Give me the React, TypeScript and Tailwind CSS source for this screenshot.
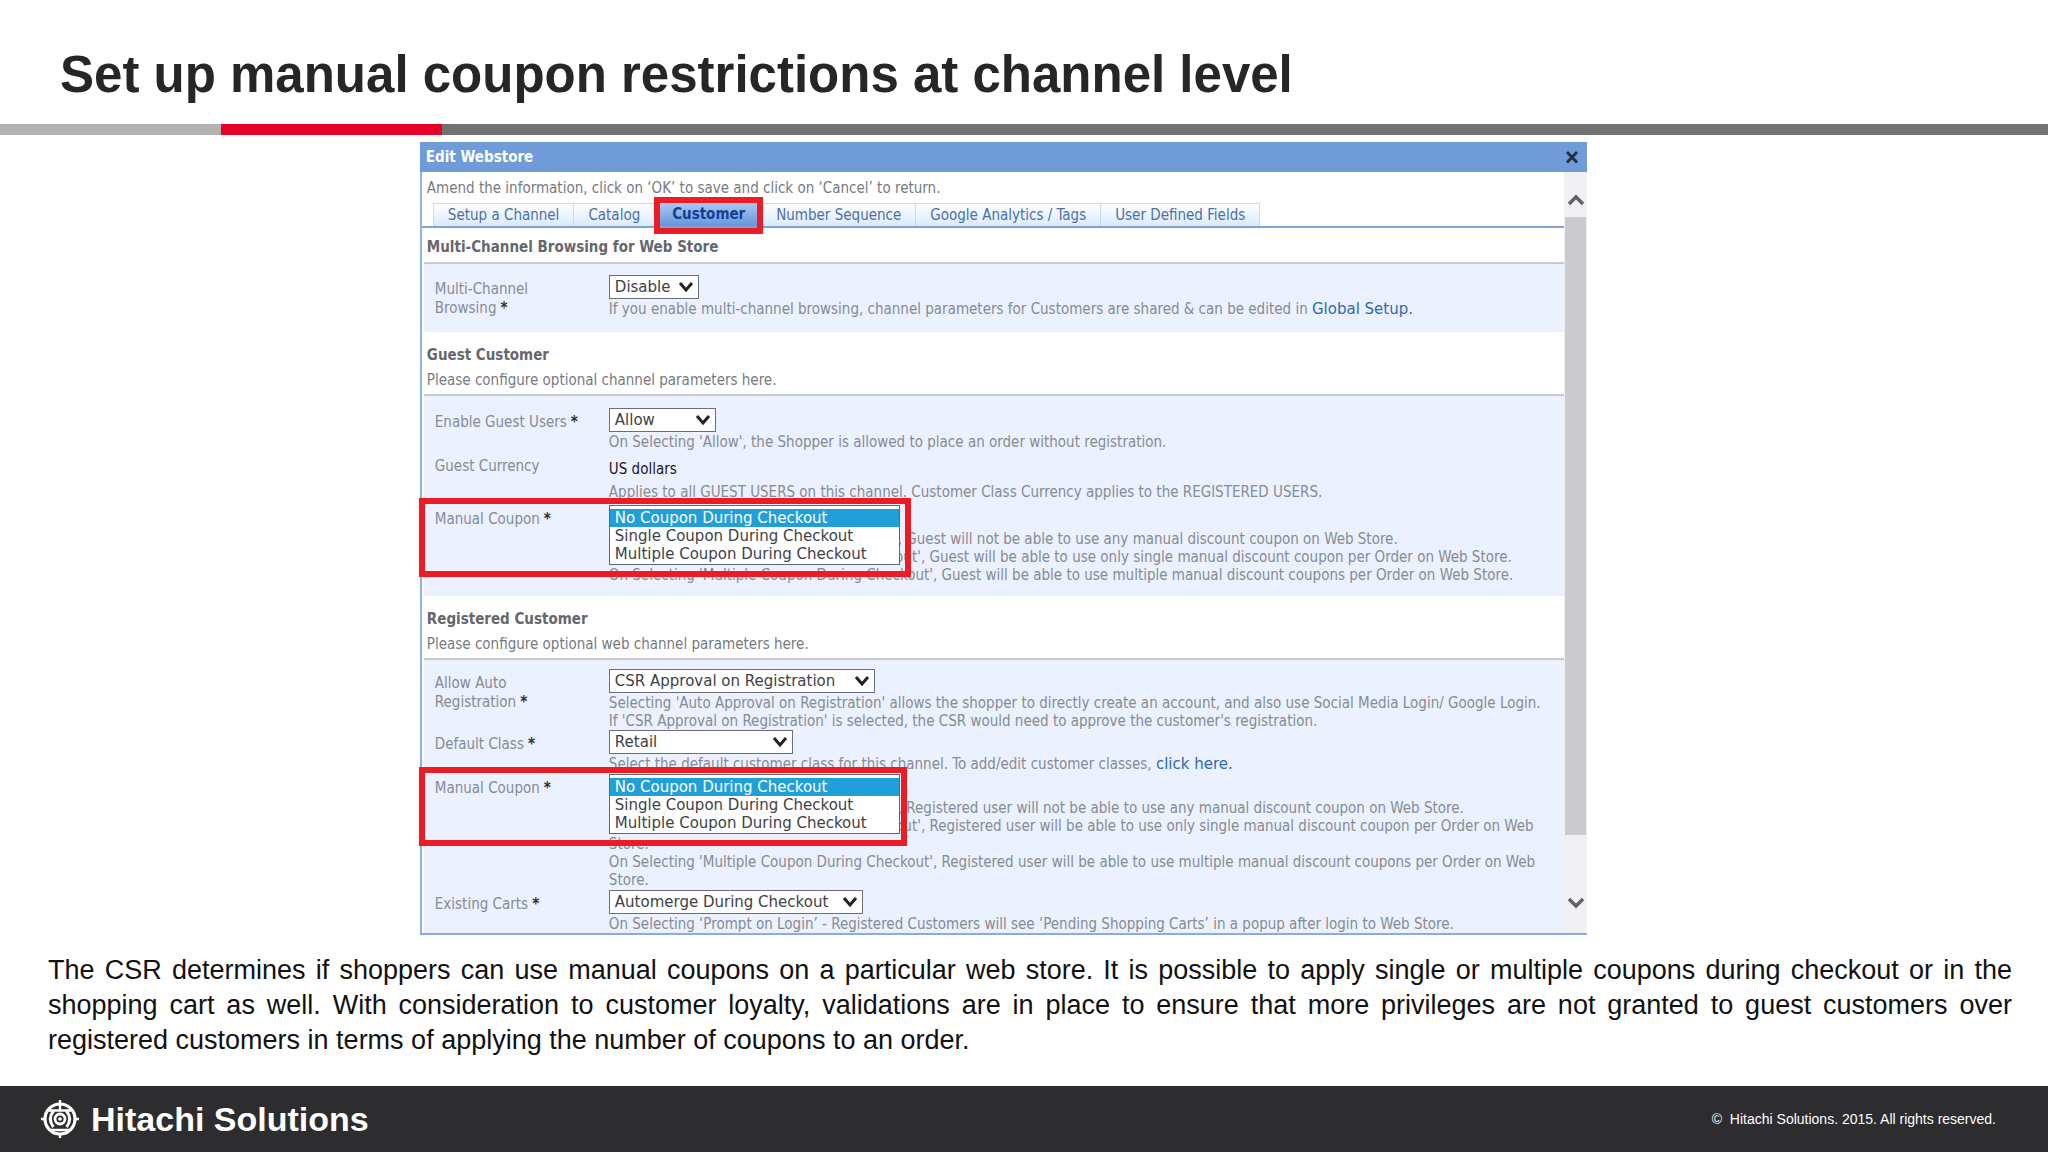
import { ReactNode } from "react";

const couponOptions = [
  "No Coupon During Checkout",
  "Single Coupon During Checkout",
  "Multiple Coupon During Checkout",
];

const tabs = [
  "Setup a Channel",
  "Catalog",
  "Customer",
  "Number Sequence",
  "Google Analytics / Tags",
  "User Defined Fields",
];

interface SectionProps {
  title: string;
  subtitle?: string;
  children: ReactNode;
}

const Section = ({ title, subtitle, children }: SectionProps) => (
  <section className="ml-[2px]">
    <div className={subtitle ? "pt-3 pb-[3px]" : "pt-2 pb-1"}>
      <h2 className="pl-[3px] text-[15px] leading-[22px] font-bold text-[#65676b]">{title}</h2>
      {subtitle && <p className="mt-[3px] pl-[3px] text-[15px] leading-[22px]">{subtitle}</p>}
    </div>
    <div className="border-t-2 border-[#c8cacd] bg-[#ebf1fe] pl-[11px] text-[#868b93]">{children}</div>
  </section>
);

interface RowProps {
  label: string;
  id?: string;
  required?: boolean;
  highlight?: string;
  children: ReactNode;
}

const Row = ({ label, id, required, highlight, children }: RowProps) => (
  <div className="relative flex items-start">
    <label htmlFor={id} className="w-[174px] shrink-0 pt-[5px] pr-4 text-[15px] leading-[19px]">
      {label}
      {required && <b className="ml-1 text-[#2c2e33]">*</b>}
    </label>
    <div className="min-w-0 flex-1 pr-4">{children}</div>
    {highlight && (
      <div
        className={`pointer-events-none absolute -top-[7px] -left-4 h-[79px] border-[6px] border-[#ed1c24] ${highlight}`}
      />
    )}
  </div>
);

const Help = ({ children }: { children: ReactNode }) => (
  <p className="mt-px text-[15px] leading-[18px]">{children}</p>
);

interface DropDownProps {
  id: string;
  value: string;
  width: string;
}

const DropDown = ({ id, value, width }: DropDownProps) => (
  <div className={`relative h-6 ${width}`}>
    <select
      id={id}
      defaultValue={value}
      className="block h-6 w-full appearance-none border border-[#6b6f75] bg-white pl-[5px] font-['DejaVu_Sans',sans-serif] text-[15px] leading-5 text-[#3e4147]"
    >
      <option>{value}</option>
    </select>
    <svg viewBox="0 0 16 12" className="pointer-events-none absolute top-[7px] right-[5px] h-3 w-4">
      <path d="M2 1l6 7 6-7" fill="none" stroke="#222" strokeWidth="3" />
    </svg>
  </div>
);

// Opened list, it hangs over the help text below
const CouponList = ({ id }: { id: string }) => (
  <div className="relative h-6">
    <select
      id={id}
      size={3}
      defaultValue={couponOptions[0]}
      className="absolute top-0 left-0 h-[60px] w-[291px] overflow-hidden border border-[#5f666e] bg-white pt-[3px] font-['DejaVu_Sans',sans-serif] text-[15px] text-[#3e4147]"
    >
      {couponOptions.map((option) => (
        <option
          key={option}
          className="h-[18px] min-h-0 px-[5px] py-0 leading-[18px] checked:bg-[linear-gradient(#219fd9,#219fd9)] checked:text-white"
        >
          {option}
        </option>
      ))}
    </select>
  </div>
);

const EditWebstore = () => (
  <div className="mt-[7px] ml-[20.5%] w-[57%] font-['DejaVu_Sans_Condensed','DejaVu_Sans',sans-serif]">
    <div className="flex h-[30px] items-center justify-between bg-[#6f9bd9] pr-2 pl-[6px]">
      <h2 className="text-[15px] font-bold text-white">Edit Webstore</h2>
      <button aria-label="Close" className="p-0">
        <svg viewBox="0 0 14 14" className="h-[14px] w-[14px]">
          <path d="M2 2l10 10.500M12 2L2 12.500" stroke="#26303d" strokeWidth="2.800" />
        </svg>
      </button>
    </div>
    <div className="flex border-b-2 border-[#86aee0]">
      <div className="min-w-0 flex-1 border-l-2 border-[#8fb2e3] text-[15px] text-[#777a80]">
        <p className="pt-[5px] pl-[5px] leading-[22px]">
          Amend the information, click on ‘OK’ to save and click on ‘Cancel’ to return.
        </p>
        <div className="mt-1 flex h-[25px] border-b-2 border-[#7ba2d9] pl-[11px]" role="tablist">
          {tabs.map((tab) =>
            tab === "Customer" ? (
              <div key={tab} className="relative w-[107px]">
                <button
                  role="tab"
                  aria-selected="true"
                  className="h-full w-full bg-linear-to-b from-[#a9c9f3] to-[#6795dc] font-bold text-[#123f94]"
                >
                  {tab}
                </button>
                <div className="pointer-events-none absolute -inset-x-px -top-[6px] -bottom-2 border-[6px] border-[#ed1c24]" />
              </div>
            ) : (
              <button
                key={tab}
                role="tab"
                aria-selected="false"
                className="border-t border-r border-[#c5dcf7] bg-linear-to-b from-white to-[#d9eafd] px-[14px] whitespace-nowrap text-[#4c6fa8] first:border-l"
              >
                {tab}
              </button>
            )
          )}
        </div>

        <Section title="Multi-Channel Browsing for Web Store">
          <div className="pt-[11px] pb-[14px]">
            <Row label="Multi-Channel Browsing" id="browsing" required>
              <DropDown id="browsing" value="Disable" width="w-[90px]" />
              <Help>
                If you enable multi-channel browsing, channel parameters for Customers are shared &amp; can be edited in{" "}
                <a href="#setup" className="font-['DejaVu_Sans',sans-serif] text-[#2f68b0]">Global Setup.</a>
              </Help>
            </Row>
          </div>
        </Section>

        <Section title="Guest Customer" subtitle="Please configure optional channel parameters here.">
          <div className="pt-3 pb-3">
            <Row label="Enable Guest Users" id="guest-users" required>
              <DropDown id="guest-users" value="Allow" width="w-[107px]" />
              <Help>On Selecting 'Allow', the Shopper is allowed to place an order without registration.</Help>
            </Row>
            <div className="h-px" />
            <Row label="Guest Currency">
              <p className="pt-[6px] text-[15px] leading-[22px] text-[#16181c]">US dollars</p>
              <div className="h-[2px]" />
              <Help>
                Applies to all GUEST USERS on this channel. Customer Class Currency applies to the REGISTERED USERS.
              </Help>
            </Row>
            <div className="h-1" />
            <Row label="Manual Coupon" id="guest-coupon" required highlight="w-[492px]">
              <CouponList id="guest-coupon" />
              <Help>
                On Selecting 'No Coupon During Checkout', Guest will not be able to use any manual discount coupon on Web Store.
                <br />
                On Selecting 'Single Coupon During Checkout', Guest will be able to use only single manual discount coupon per Order on Web Store.
                <br />
                On Selecting 'Multiple Coupon During Checkout', Guest will be able to use multiple manual discount coupons per Order on Web Store.
              </Help>
            </Row>
          </div>
        </Section>

        <Section title="Registered Customer" subtitle="Please configure optional web channel parameters here.">
          <div className="pt-[9px]">
            <Row label="Allow Auto Registration" id="auto-registration" required>
              <DropDown id="auto-registration" value="CSR Approval on Registration" width="w-[266px]" />
              <Help>
                Selecting 'Auto Approval on Registration' allows the shopper to directly create an account, and also use Social Media Login/ Google Login.
                <br />
                If 'CSR Approval on Registration' is selected, the CSR would need to approve the customer's registration.
              </Help>
            </Row>
            <Row label="Default Class" id="default-class" required>
              <DropDown id="default-class" value="Retail" width="w-[184px]" />
              <Help>
                Select the default customer class for this channel. To add/edit customer classes,{" "}
                <a href="#classes" className="font-['DejaVu_Sans',sans-serif] text-[#2f68b0]">click here.</a>
              </Help>
            </Row>
            <div className="h-px" />
            <Row label="Manual Coupon" id="registered-coupon" required highlight="w-[488px]">
              <CouponList id="registered-coupon" />
              <Help>
                On Selecting 'No Coupon During Checkout', Registered user will not be able to use any manual discount coupon on Web Store.
                <br />
                On Selecting 'Single Coupon During Checkout', Registered user will be able to use only single manual discount coupon per Order on Web Store.
                <br />
                On Selecting 'Multiple Coupon During Checkout', Registered user will be able to use multiple manual discount coupons per Order on Web Store.
              </Help>
            </Row>
            <div className="h-px" />
            <Row label="Existing Carts" id="existing-carts" required>
              <DropDown id="existing-carts" value="Automerge During Checkout" width="w-[254px]" />
              <Help>
                On Selecting ‘Prompt on Login’ - Registered Customers will see ‘Pending Shopping Carts’ in a popup after login to Web Store.
              </Help>
            </Row>
          </div>
        </Section>
      </div>

      {/* Scroll bar */}
      <div className="flex w-[23px] flex-col items-center bg-[#f0f0f2]">
        <svg viewBox="0 0 16 12" className="mt-[22px] mb-[11px] h-3 w-4">
          <path d="M1 10l7-7 7 7" fill="none" stroke="#606266" strokeWidth="3.4" />
        </svg>
        <div className="w-[21px] flex-1 bg-[#cbcbcd]" />
        <svg viewBox="0 0 16 12" className="mt-[62px] mb-6 h-3 w-4">
          <path d="M1 2l7 7 7-7" fill="none" stroke="#606266" strokeWidth="3.4" />
        </svg>
      </div>
    </div>
  </div>
);

const Logo = () => (
  <svg viewBox="0 0 38 38" className="h-[38px] w-[38px]" fill="none" stroke="#fff" strokeWidth="2.4">
    <circle cx="19" cy="19" r="15" strokeWidth="3.2" />
    <circle cx="19" cy="19" r="5" strokeWidth="2.8" />
    <circle cx="19" cy="19" r="1.8" fill="#fff" stroke="none" />
    <path d="M12.500 11c-4 5-4 11 0 16M25.500 11c4 5 4 11 0 16" strokeWidth="3" />
    <path d="M8 10.500h22M10 30h18M19 0v10M19 33v5M0 19h5M33 19h5" />
  </svg>
);

const App = () => (
  <div className="flex min-h-screen flex-col bg-white font-['Liberation_Sans',Arial,sans-serif]">
    <h1 className="px-[60px] pt-[45px] pb-[19px] text-[51px] leading-[60px] font-bold text-[#262626]">
      Set up manual coupon restrictions at channel level
    </h1>
    <div className="flex h-[11px]">
      <div className="w-[10.8%] bg-[#b2b2b2]" />
      <div className="w-[10.8%] bg-[#e60028]" />
      <div className="flex-1 bg-[#707370]" />
    </div>
    <EditWebstore />
    <p className="mt-[18px] px-12 pr-9 text-justify text-[27px] leading-[35px] text-[#111]">
      The CSR determines if shoppers can use manual coupons on a particular web store. It is possible to apply single or
      multiple coupons during checkout or in the shopping cart as well. With consideration to customer loyalty,
      validations are in place to ensure that more privileges are not granted to guest customers over registered
      customers in terms of applying the number of coupons to an order.
    </p>
    <footer className="mt-auto flex h-[66px] items-center justify-between bg-[#2d2c2e] pr-[52px] pl-[41px] text-white">
      <div className="flex items-center gap-3">
        <Logo />
        <span className="text-[34px] leading-[40px] font-bold">Hitachi Solutions</span>
      </div>
      <small className="text-[14px]">©&nbsp; Hitachi Solutions. 2015. All rights reserved.</small>
    </footer>
  </div>
);

export default App;
